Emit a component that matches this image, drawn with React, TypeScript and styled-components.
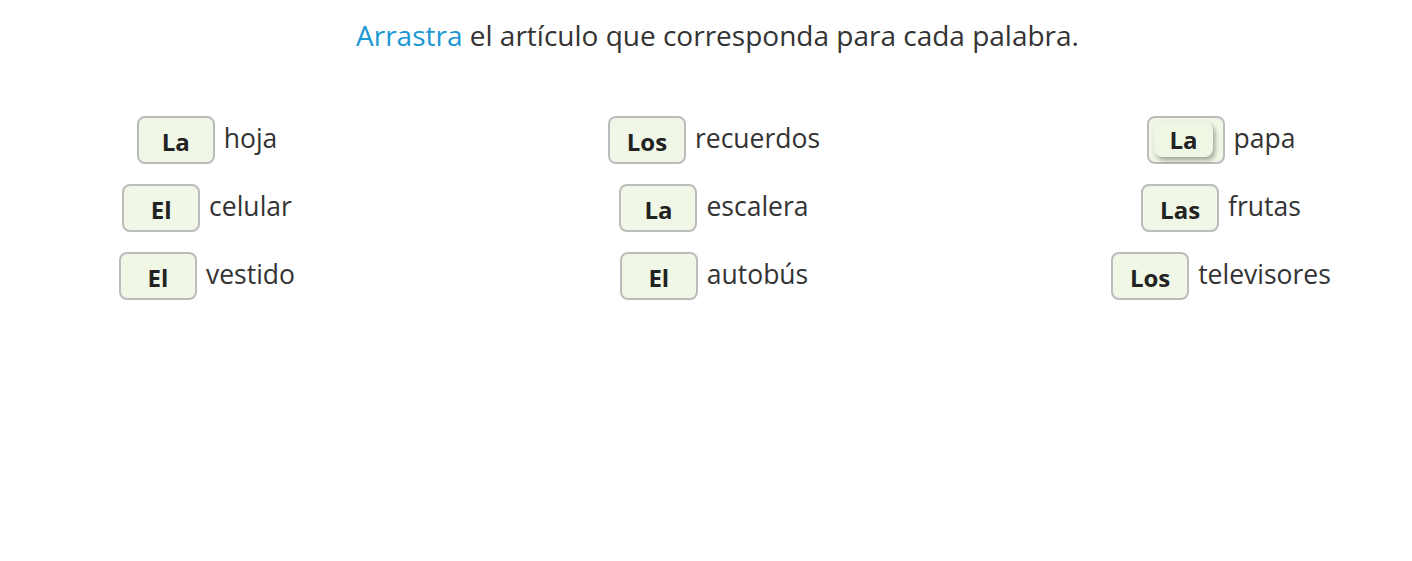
import styled, { createGlobalStyle } from 'styled-components';

const GlobalStyle = createGlobalStyle`
  html, body {
    margin: 0;
    padding: 0;
    background: #ffffff;
  }
  body {
    font-family: "Open Sans", "Noto Sans", sans-serif;
    color: #333333;
  }
`;

interface Item {
    article: string;
    word: string;
    dragged?: boolean;
}

const columns: Item[][] = [
    [
        { article: 'La', word: 'hoja' },
        { article: 'El', word: 'celular' },
        { article: 'El', word: 'vestido' },
    ],
    [
        { article: 'Los', word: 'recuerdos' },
        { article: 'La', word: 'escalera' },
        { article: 'El', word: 'autobús' },
    ],
    [
        { article: 'La', word: 'papa', dragged: true },
        { article: 'Las', word: 'frutas' },
        { article: 'Los', word: 'televisores' },
    ],
];

export default function App() {
    return (
        <>
            <GlobalStyle />
            <Page>
                <Title>
                    <Highlight>Arrastra</Highlight> el artículo que corresponda para cada palabra.
                </Title>
                <Grid>
                    {columns.map((col, i) => (
                        <Column key={i}>
                            {col.map((item) => (
                                <Row key={item.word}>
                                    <Slot>
                                        {item.dragged ? <Chip>{item.article}</Chip> : <Article>{item.article}</Article>}
                                    </Slot>
                                    <Word>{item.word}</Word>
                                </Row>
                            ))}
                        </Column>
                    ))}
                </Grid>
            </Page>
        </>
    );
}

const Page = styled.div`
    width: 1412px;
    height: 561px;
    box-sizing: border-box;
    padding-top: 13px;
`;

const Title = styled.h1`
    margin: 0;
    padding-left: 23px;
    text-align: center;
    font-size: 28px;
    font-weight: 400;
    line-height: 44px;
    color: #333333;
`;

const Highlight = styled.span`
    color: #1b97d5;
`;

const Grid = styled.div`
    display: grid;
    grid-template-columns: repeat(3, 366px);
    column-gap: 141px;
    padding-left: 24px;
    margin-top: 59px;
`;

const Column = styled.div`
    display: flex;
    flex-direction: column;
    align-items: center;
    gap: 20px;
`;

const Row = styled.div`
    display: flex;
    align-items: center;
    gap: 9px;
`;

const Slot = styled.div`
    flex: 0 0 78px;
    width: 78px;
    height: 48px;
    box-sizing: border-box;
    border: 2px solid #bcbcbc;
    border-radius: 8px;
    background: #f0f7e6;
    display: flex;
    align-items: center;
    justify-content: center;
`;

const Article = styled.span`
    font-size: 24px;
    font-weight: 700;
    color: #222222;
    padding-top: 2px;
`;

const Chip = styled.span`
    width: 59px;
    height: 35px;
    box-sizing: border-box;
    border-radius: 8px;
    background: #eef6e4;
    box-shadow: 2px 3px 5px rgba(0, 0, 0, 0.35);
    display: flex;
    align-items: center;
    justify-content: center;
    font-size: 24px;
    font-weight: 700;
    color: #222222;
    margin: -2px 0 0 -4px;
`;

const Word = styled.span`
    font-size: 26.5px;
    line-height: 36px;
    color: #333333;
    margin-bottom: 4px;
`;
